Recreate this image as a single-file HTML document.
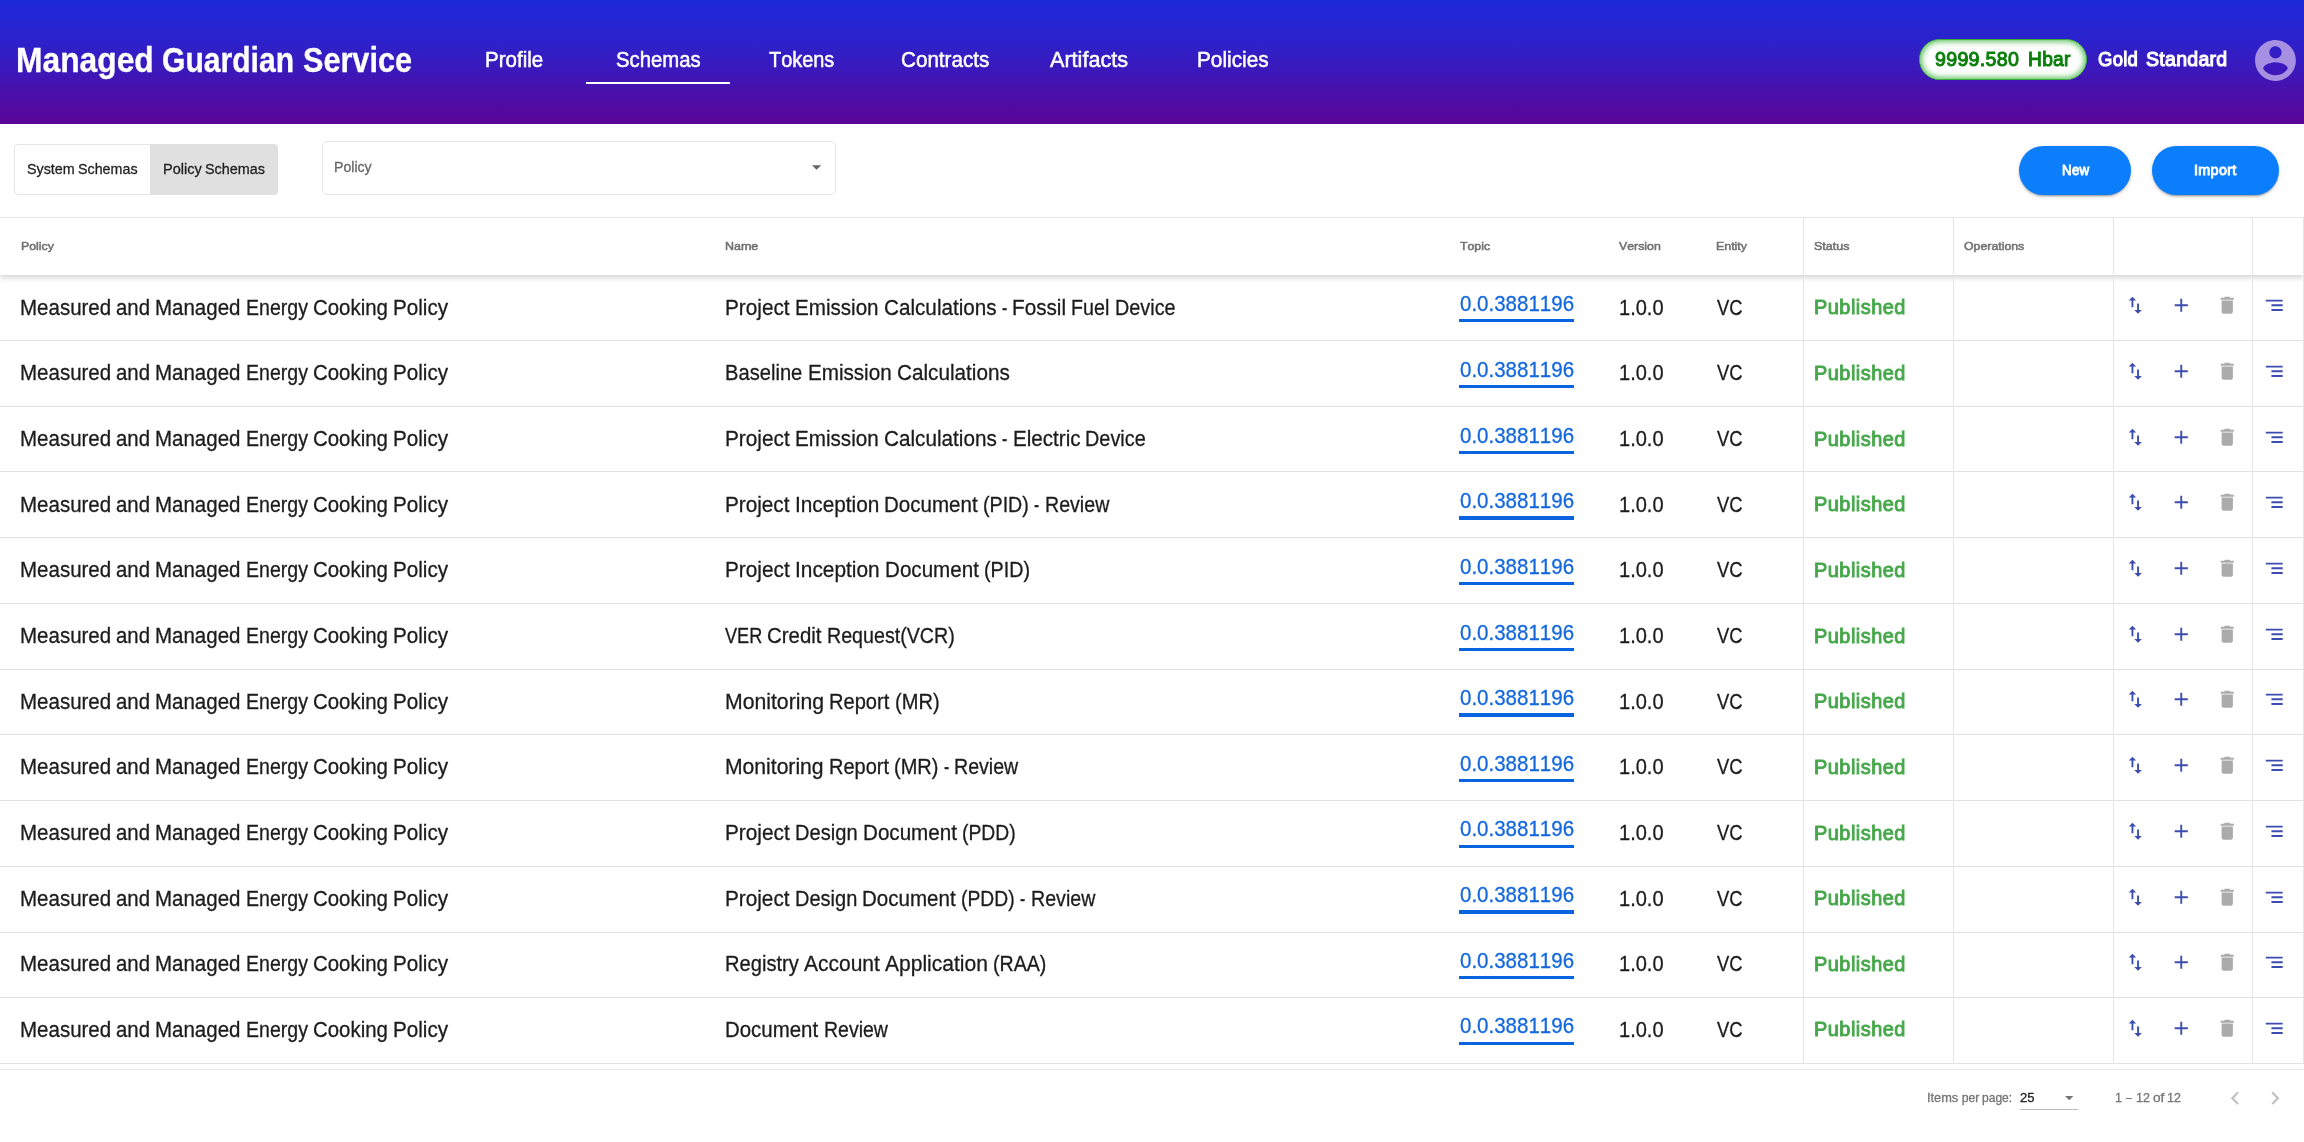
<!DOCTYPE html>
<html><head><meta charset="utf-8"><title>Schemas</title>
<style>
html,body{margin:0;padding:0;}
body{width:2304px;height:1142px;background:#fff;overflow:hidden;position:relative;font-family:"Liberation Sans",sans-serif;}
.t{position:absolute;white-space:nowrap;transform-origin:0 0;font-kerning:none;-webkit-text-stroke:0.3px currentColor;}
.a{position:absolute;}
.hl{position:absolute;left:0;width:2304px;height:1px;background:#e0e0e0;}
.vl{position:absolute;width:1px;background:#e5e5e5;top:217px;height:847px;}
svg{position:absolute;overflow:visible;}
#w{position:absolute;left:0;top:0;width:2304px;height:1142px;will-change:transform;}
</style></head><body><div id="w">

<div class="a" style="left:0;top:0;width:2304px;height:124px;background:linear-gradient(180deg,#1b28d8 0%,#2b22cd 30%,#3a19bc 55%,#53099f 88%,#5a059a 100%);"></div>
<span class="t" style="left:16.07px;top:38px;font-size:34.425px;line-height:44px;font-weight:bold;color:#fff;transform:scaleX(0.9238);">Managed</span>
<span class="t" style="left:162.37px;top:38px;font-size:34.425px;line-height:44px;font-weight:bold;color:#fff;transform:scaleX(0.8742);">Guardian</span>
<span class="t" style="left:303.02px;top:38px;font-size:34.425px;line-height:44px;font-weight:bold;color:#fff;transform:scaleX(0.8900);">Service</span>
<span class="t" style="left:485.12px;top:44px;font-size:22.236px;line-height:31px;font-weight:normal;color:#fff;transform:scaleX(0.9234);-webkit-text-stroke:0.5px #fff;">Profile</span>
<span class="t" style="left:615.68px;top:44px;font-size:22.236px;line-height:31px;font-weight:normal;color:#fff;transform:scaleX(0.9144);-webkit-text-stroke:0.5px #fff;">Schemas</span>
<span class="t" style="left:768.85px;top:44px;font-size:22.236px;line-height:31px;font-weight:normal;color:#fff;transform:scaleX(0.8965);-webkit-text-stroke:0.5px #fff;">Tokens</span>
<span class="t" style="left:901.05px;top:44px;font-size:22.236px;line-height:31px;font-weight:normal;color:#fff;transform:scaleX(0.9290);-webkit-text-stroke:0.5px #fff;">Contracts</span>
<span class="t" style="left:1049.56px;top:44px;font-size:22.236px;line-height:31px;font-weight:normal;color:#fff;transform:scaleX(0.9727);-webkit-text-stroke:0.5px #fff;">Artifacts</span>
<span class="t" style="left:1197.09px;top:44px;font-size:22.236px;line-height:31px;font-weight:normal;color:#fff;transform:scaleX(0.9352);-webkit-text-stroke:0.5px #fff;">Policies</span>
<div class="a" style="left:586px;top:82px;width:144px;height:2px;background:#fff;"></div>
<div class="a" style="left:1918.500px;top:39px;width:168px;height:41px;box-sizing:border-box;border:1.500px solid #35b035;border-radius:21px;background:#fff;box-shadow:inset 0 0 6px 1px #3cb43c;"></div>
<span class="t" style="left:1934.97px;top:44px;font-size:20.808px;line-height:29px;font-weight:normal;color:#0b7f0b;transform:scaleX(0.9439);letter-spacing:0.3px;-webkit-text-stroke:1.04px #0b7f0b;">9999.580</span>
<span class="t" style="left:2027.81px;top:44px;font-size:20.808px;line-height:29px;font-weight:normal;color:#0b7f0b;transform:scaleX(0.9224);letter-spacing:0.3px;-webkit-text-stroke:1.04px #0b7f0b;">Hbar</span>
<span class="t" style="left:2098.28px;top:44px;font-size:20.808px;line-height:29px;font-weight:normal;color:#fff;transform:scaleX(0.8897);letter-spacing:0.3px;-webkit-text-stroke:1.14px #fff;">Gold</span>
<span class="t" style="left:2146.05px;top:44px;font-size:20.808px;line-height:29px;font-weight:normal;color:#fff;transform:scaleX(0.9390);letter-spacing:0.3px;-webkit-text-stroke:1.14px #fff;">Standard</span>
<svg style="left:2250.5px;top:35.5px" width="49" height="49" viewBox="0 0 24 24"><path fill="#a78fe2" d="M12 2C6.48 2 2 6.48 2 12s4.48 10 10 10 10-4.480 10-10S17.520 2 12 2zm0 3c1.660 0 3 1.340 3 3s-1.340 3-3 3-3-1.340-3-3 1.340-3 3-3zm0 14.200c-2.500 0-4.710-1.280-6-3.220.030-1.990 4-3.080 6-3.080 1.990 0 5.970 1.090 6 3.080-1.290 1.940-3.500 3.220-6 3.220z"/></svg>
<div class="a" style="left:14px;top:144px;width:264px;height:50.500px;box-sizing:border-box;border:1px solid #e4e4e4;border-radius:4px;background:#fff;"></div>
<div class="a" style="left:150px;top:144px;width:128px;height:50.500px;box-sizing:border-box;border:1px solid #e0e0e0;border-radius:0 4px 4px 0;background:#e0e0e0;"></div>
<span class="t" style="left:27.04px;top:157px;font-size:15.3px;line-height:23px;font-weight:normal;color:#1f1f1f;transform:scaleX(0.9362);">System</span><span class="t" style="left:78.37px;top:157px;font-size:15.3px;line-height:23px;font-weight:normal;color:#1f1f1f;transform:scaleX(0.9336);">Schemas</span>
<span class="t" style="left:162.50px;top:157px;font-size:15.3px;line-height:23px;font-weight:normal;color:#1f1f1f;transform:scaleX(0.9534);">Policy</span><span class="t" style="left:205.00px;top:157px;font-size:15.3px;line-height:23px;font-weight:normal;color:#1f1f1f;transform:scaleX(0.9395);">Schemas</span>
<div class="a" style="left:322px;top:140.500px;width:513.500px;height:54px;box-sizing:border-box;border:1px solid #e6e6e6;border-radius:5px;background:#fff;"></div>
<span class="t" style="left:333.84px;top:155px;font-size:15.3px;line-height:23px;font-weight:normal;color:#666;transform:scaleX(0.9234);">Policy</span>
<svg style="left:811.700px;top:164.900px" width="9.200" height="5" viewBox="0 0 10 5"><path fill="#666" d="M0 0h10L5 5z"/></svg>
<div class="a" style="left:2019px;top:146px;width:112px;height:48.500px;border-radius:24.250px;background:#0d7efb;box-shadow:0 3px 1px -2px rgba(0,0,0,.2),0 2px 2px 0 rgba(0,0,0,.14),0 1px 5px 0 rgba(0,0,0,.12);"></div>
<span class="t" style="left:2061.52px;top:158px;font-size:15.096px;line-height:23px;font-weight:normal;color:#fff;transform:scaleX(0.8814);letter-spacing:0.35px;-webkit-text-stroke:0.94px #fff;">New</span>
<div class="a" style="left:2152px;top:146px;width:127px;height:48.500px;border-radius:24.250px;background:#0d7efb;box-shadow:0 3px 1px -2px rgba(0,0,0,.2),0 2px 2px 0 rgba(0,0,0,.14),0 1px 5px 0 rgba(0,0,0,.12);"></div>
<span class="t" style="left:2194.12px;top:158px;font-size:15.096px;line-height:23px;font-weight:normal;color:#fff;transform:scaleX(0.9508);letter-spacing:0.35px;-webkit-text-stroke:0.94px #fff;">Import</span>
<div class="hl" style="top:217px;background:#ebebeb;"></div>
<div class="a" style="left:0;top:218px;width:2304px;height:57px;background:#fff;box-shadow:0 3px 5px rgba(0,0,0,.16);"></div>
<span class="t" style="left:20.76px;top:236px;font-size:11.832px;line-height:20px;font-weight:normal;color:#707070;transform:scaleX(1.0450);-webkit-text-stroke:0.53px #707070;">Policy</span>
<span class="t" style="left:724.56px;top:236px;font-size:11.832px;line-height:20px;font-weight:normal;color:#707070;transform:scaleX(1.0524);-webkit-text-stroke:0.53px #707070;">Name</span>
<span class="t" style="left:1459.50px;top:236px;font-size:11.832px;line-height:20px;font-weight:normal;color:#707070;transform:scaleX(1.0385);-webkit-text-stroke:0.53px #707070;">Topic</span>
<span class="t" style="left:1619.22px;top:236px;font-size:11.832px;line-height:20px;font-weight:normal;color:#707070;transform:scaleX(1.0419);-webkit-text-stroke:0.53px #707070;">Version</span>
<span class="t" style="left:1716.26px;top:236px;font-size:11.832px;line-height:20px;font-weight:normal;color:#707070;transform:scaleX(1.0470);-webkit-text-stroke:0.53px #707070;">Entity</span>
<span class="t" style="left:1814.21px;top:236px;font-size:11.832px;line-height:20px;font-weight:normal;color:#707070;transform:scaleX(1.0571);-webkit-text-stroke:0.53px #707070;">Status</span>
<span class="t" style="left:1963.89px;top:236px;font-size:11.832px;line-height:20px;font-weight:normal;color:#707070;transform:scaleX(1.0414);-webkit-text-stroke:0.53px #707070;">Operations</span>
<div class="hl" style="top:340.00px;"></div>
<span class="t" style="left:20.01px;top:292px;font-size:21.624px;line-height:31px;font-weight:normal;color:#1c1c1c;transform:scaleX(0.9488);">Measured</span><span class="t" style="left:116.32px;top:292px;font-size:21.624px;line-height:31px;font-weight:normal;color:#1c1c1c;transform:scaleX(0.9435);">and</span><span class="t" style="left:155.45px;top:292px;font-size:21.624px;line-height:31px;font-weight:normal;color:#1c1c1c;transform:scaleX(0.9483);">Managed</span><span class="t" style="left:246.12px;top:292px;font-size:21.624px;line-height:31px;font-weight:normal;color:#1c1c1c;transform:scaleX(0.9040);">Energy</span><span class="t" style="left:313.14px;top:292px;font-size:21.624px;line-height:31px;font-weight:normal;color:#1c1c1c;transform:scaleX(0.9448);">Cooking</span><span class="t" style="left:393.18px;top:292px;font-size:21.624px;line-height:31px;font-weight:normal;color:#1c1c1c;transform:scaleX(0.9546);">Policy</span>
<span class="t" style="left:725.28px;top:292px;font-size:21.624px;line-height:31px;font-weight:normal;color:#1c1c1c;transform:scaleX(0.9611);">Project</span><span class="t" style="left:795.02px;top:292px;font-size:21.624px;line-height:31px;font-weight:normal;color:#1c1c1c;transform:scaleX(0.9532);">Emission</span><span class="t" style="left:883.68px;top:292px;font-size:21.624px;line-height:31px;font-weight:normal;color:#1c1c1c;transform:scaleX(0.9571);">Calculations</span><span class="t" style="left:1001.70px;top:292px;font-size:21.624px;line-height:31px;font-weight:normal;color:#1c1c1c;transform:scaleX(0.7252);">-</span><span class="t" style="left:1012.18px;top:292px;font-size:21.624px;line-height:31px;font-weight:normal;color:#1c1c1c;transform:scaleX(0.9576);">Fossil</span><span class="t" style="left:1071.37px;top:292px;font-size:21.624px;line-height:31px;font-weight:normal;color:#1c1c1c;transform:scaleX(0.9107);">Fuel</span><span class="t" style="left:1114.85px;top:292px;font-size:21.624px;line-height:31px;font-weight:normal;color:#1c1c1c;transform:scaleX(0.9174);">Device</span>
<span class="t" style="left:1459.50px;top:288px;font-size:21.624px;line-height:31px;font-weight:normal;color:#1468de;transform:scaleX(0.9489);">0.0.3881196</span>
<div class="a" style="left:1459.300px;top:319.30px;width:114.700px;height:3.200px;background:#0a63df;"></div>
<span class="t" style="left:1618.77px;top:292px;font-size:21.624px;line-height:31px;font-weight:normal;color:#1c1c1c;transform:scaleX(0.9276);">1.0.0</span>
<span class="t" style="left:1716.92px;top:292px;font-size:21.624px;line-height:31px;font-weight:normal;color:#1c1c1c;transform:scaleX(0.8516);">VC</span>
<span class="t" style="left:1814.01px;top:293px;font-size:19.992px;line-height:28px;font-weight:normal;color:#46a84a;transform:scaleX(0.9958);letter-spacing:0.5px;-webkit-text-stroke:0.90px #46a84a;">Published</span>
<svg style="left:2124px;top:294.40px" width="22.5" height="22.5" viewBox="0 0 24 24"><path fill="#3c4cb0" d="M9 3L5 6.990h3V14h2V6.990h3L9 3zm7 14.010V10h-2v7.010h-3L15 21l4-3.990h-3z"/></svg>
<svg style="left:2170px;top:294.40px" width="22.5" height="22.5" viewBox="0 0 24 24"><path fill="#3c4cb0" d="M19 13h-6v6h-2v-6H5v-2h6V5h2v6h6v2z"/></svg>
<svg style="left:2216.200px;top:294.40px" width="22.5" height="22.5" viewBox="0 0 24 24"><path fill="#ababab" d="M6 19c0 1.100.900 2 2 2h8c1.100 0 2-.900 2-2V7H6v12zM19 4h-3.500l-1-1h-5l-1 1H5v2h14V4z"/></svg>
<svg style="left:2263.200px;top:294.40px" width="22.5" height="22.5" viewBox="0 0 24 24"><path fill="#3c4cb0" d="M9 18h12v-2H9v2zM3 6v2h18V6H3zm6 7h12v-2H9v2z"/></svg>
<div class="hl" style="top:405.73px;"></div>
<span class="t" style="left:20.01px;top:357px;font-size:21.624px;line-height:31px;font-weight:normal;color:#1c1c1c;transform:scaleX(0.9488);">Measured</span><span class="t" style="left:116.32px;top:357px;font-size:21.624px;line-height:31px;font-weight:normal;color:#1c1c1c;transform:scaleX(0.9435);">and</span><span class="t" style="left:155.45px;top:357px;font-size:21.624px;line-height:31px;font-weight:normal;color:#1c1c1c;transform:scaleX(0.9483);">Managed</span><span class="t" style="left:246.12px;top:357px;font-size:21.624px;line-height:31px;font-weight:normal;color:#1c1c1c;transform:scaleX(0.9040);">Energy</span><span class="t" style="left:313.14px;top:357px;font-size:21.624px;line-height:31px;font-weight:normal;color:#1c1c1c;transform:scaleX(0.9448);">Cooking</span><span class="t" style="left:393.18px;top:357px;font-size:21.624px;line-height:31px;font-weight:normal;color:#1c1c1c;transform:scaleX(0.9546);">Policy</span>
<span class="t" style="left:725.33px;top:357px;font-size:21.624px;line-height:31px;font-weight:normal;color:#1c1c1c;transform:scaleX(0.9328);">Baseline</span><span class="t" style="left:807.79px;top:357px;font-size:21.624px;line-height:31px;font-weight:normal;color:#1c1c1c;transform:scaleX(0.9539);">Emission</span><span class="t" style="left:896.52px;top:357px;font-size:21.624px;line-height:31px;font-weight:normal;color:#1c1c1c;transform:scaleX(0.9579);">Calculations</span>
<span class="t" style="left:1459.50px;top:354px;font-size:21.624px;line-height:31px;font-weight:normal;color:#1468de;transform:scaleX(0.9489);">0.0.3881196</span>
<div class="a" style="left:1459.300px;top:384.98px;width:114.700px;height:3.200px;background:#0a63df;"></div>
<span class="t" style="left:1618.77px;top:357px;font-size:21.624px;line-height:31px;font-weight:normal;color:#1c1c1c;transform:scaleX(0.9276);">1.0.0</span>
<span class="t" style="left:1716.92px;top:357px;font-size:21.624px;line-height:31px;font-weight:normal;color:#1c1c1c;transform:scaleX(0.8516);">VC</span>
<span class="t" style="left:1814.01px;top:359px;font-size:19.992px;line-height:28px;font-weight:normal;color:#46a84a;transform:scaleX(0.9958);letter-spacing:0.5px;-webkit-text-stroke:0.90px #46a84a;">Published</span>
<svg style="left:2124px;top:360.08px" width="22.5" height="22.5" viewBox="0 0 24 24"><path fill="#3c4cb0" d="M9 3L5 6.990h3V14h2V6.990h3L9 3zm7 14.010V10h-2v7.010h-3L15 21l4-3.990h-3z"/></svg>
<svg style="left:2170px;top:360.08px" width="22.5" height="22.5" viewBox="0 0 24 24"><path fill="#3c4cb0" d="M19 13h-6v6h-2v-6H5v-2h6V5h2v6h6v2z"/></svg>
<svg style="left:2216.200px;top:360.08px" width="22.5" height="22.5" viewBox="0 0 24 24"><path fill="#ababab" d="M6 19c0 1.100.900 2 2 2h8c1.100 0 2-.900 2-2V7H6v12zM19 4h-3.500l-1-1h-5l-1 1H5v2h14V4z"/></svg>
<svg style="left:2263.200px;top:360.08px" width="22.5" height="22.5" viewBox="0 0 24 24"><path fill="#3c4cb0" d="M9 18h12v-2H9v2zM3 6v2h18V6H3zm6 7h12v-2H9v2z"/></svg>
<div class="hl" style="top:471.46px;"></div>
<span class="t" style="left:20.01px;top:423px;font-size:21.624px;line-height:31px;font-weight:normal;color:#1c1c1c;transform:scaleX(0.9488);">Measured</span><span class="t" style="left:116.32px;top:423px;font-size:21.624px;line-height:31px;font-weight:normal;color:#1c1c1c;transform:scaleX(0.9435);">and</span><span class="t" style="left:155.45px;top:423px;font-size:21.624px;line-height:31px;font-weight:normal;color:#1c1c1c;transform:scaleX(0.9483);">Managed</span><span class="t" style="left:246.12px;top:423px;font-size:21.624px;line-height:31px;font-weight:normal;color:#1c1c1c;transform:scaleX(0.9040);">Energy</span><span class="t" style="left:313.14px;top:423px;font-size:21.624px;line-height:31px;font-weight:normal;color:#1c1c1c;transform:scaleX(0.9448);">Cooking</span><span class="t" style="left:393.18px;top:423px;font-size:21.624px;line-height:31px;font-weight:normal;color:#1c1c1c;transform:scaleX(0.9546);">Policy</span>
<span class="t" style="left:725.28px;top:423px;font-size:21.624px;line-height:31px;font-weight:normal;color:#1c1c1c;transform:scaleX(0.9624);">Project</span><span class="t" style="left:795.11px;top:423px;font-size:21.624px;line-height:31px;font-weight:normal;color:#1c1c1c;transform:scaleX(0.9545);">Emission</span><span class="t" style="left:883.89px;top:423px;font-size:21.624px;line-height:31px;font-weight:normal;color:#1c1c1c;transform:scaleX(0.9584);">Calculations</span><span class="t" style="left:1002.07px;top:423px;font-size:21.624px;line-height:31px;font-weight:normal;color:#1c1c1c;transform:scaleX(0.7262);">-</span><span class="t" style="left:1012.58px;top:423px;font-size:21.624px;line-height:31px;font-weight:normal;color:#1c1c1c;transform:scaleX(0.9531);">Electric</span><span class="t" style="left:1085.27px;top:423px;font-size:21.624px;line-height:31px;font-weight:normal;color:#1c1c1c;transform:scaleX(0.9186);">Device</span>
<span class="t" style="left:1459.50px;top:420px;font-size:21.624px;line-height:31px;font-weight:normal;color:#1468de;transform:scaleX(0.9489);">0.0.3881196</span>
<div class="a" style="left:1459.300px;top:450.66px;width:114.700px;height:3.200px;background:#0a63df;"></div>
<span class="t" style="left:1618.77px;top:423px;font-size:21.624px;line-height:31px;font-weight:normal;color:#1c1c1c;transform:scaleX(0.9276);">1.0.0</span>
<span class="t" style="left:1716.92px;top:423px;font-size:21.624px;line-height:31px;font-weight:normal;color:#1c1c1c;transform:scaleX(0.8516);">VC</span>
<span class="t" style="left:1814.01px;top:425px;font-size:19.992px;line-height:28px;font-weight:normal;color:#46a84a;transform:scaleX(0.9958);letter-spacing:0.5px;-webkit-text-stroke:0.90px #46a84a;">Published</span>
<svg style="left:2124px;top:425.76px" width="22.5" height="22.5" viewBox="0 0 24 24"><path fill="#3c4cb0" d="M9 3L5 6.990h3V14h2V6.990h3L9 3zm7 14.010V10h-2v7.010h-3L15 21l4-3.990h-3z"/></svg>
<svg style="left:2170px;top:425.76px" width="22.5" height="22.5" viewBox="0 0 24 24"><path fill="#3c4cb0" d="M19 13h-6v6h-2v-6H5v-2h6V5h2v6h6v2z"/></svg>
<svg style="left:2216.200px;top:425.76px" width="22.5" height="22.5" viewBox="0 0 24 24"><path fill="#ababab" d="M6 19c0 1.100.900 2 2 2h8c1.100 0 2-.900 2-2V7H6v12zM19 4h-3.500l-1-1h-5l-1 1H5v2h14V4z"/></svg>
<svg style="left:2263.200px;top:425.76px" width="22.5" height="22.5" viewBox="0 0 24 24"><path fill="#3c4cb0" d="M9 18h12v-2H9v2zM3 6v2h18V6H3zm6 7h12v-2H9v2z"/></svg>
<div class="hl" style="top:537.19px;"></div>
<span class="t" style="left:20.01px;top:489px;font-size:21.624px;line-height:31px;font-weight:normal;color:#1c1c1c;transform:scaleX(0.9488);">Measured</span><span class="t" style="left:116.32px;top:489px;font-size:21.624px;line-height:31px;font-weight:normal;color:#1c1c1c;transform:scaleX(0.9435);">and</span><span class="t" style="left:155.45px;top:489px;font-size:21.624px;line-height:31px;font-weight:normal;color:#1c1c1c;transform:scaleX(0.9483);">Managed</span><span class="t" style="left:246.12px;top:489px;font-size:21.624px;line-height:31px;font-weight:normal;color:#1c1c1c;transform:scaleX(0.9040);">Energy</span><span class="t" style="left:313.14px;top:489px;font-size:21.624px;line-height:31px;font-weight:normal;color:#1c1c1c;transform:scaleX(0.9448);">Cooking</span><span class="t" style="left:393.18px;top:489px;font-size:21.624px;line-height:31px;font-weight:normal;color:#1c1c1c;transform:scaleX(0.9546);">Policy</span>
<span class="t" style="left:725.28px;top:489px;font-size:21.624px;line-height:31px;font-weight:normal;color:#1c1c1c;transform:scaleX(0.9589);">Project</span><span class="t" style="left:794.83px;top:489px;font-size:21.624px;line-height:31px;font-weight:normal;color:#1c1c1c;transform:scaleX(0.9617);">Inception</span><span class="t" style="left:884.25px;top:489px;font-size:21.624px;line-height:31px;font-weight:normal;color:#1c1c1c;transform:scaleX(0.9505);">Document</span><span class="t" style="left:983.03px;top:489px;font-size:21.624px;line-height:31px;font-weight:normal;color:#1c1c1c;transform:scaleX(0.9082);">(PID)</span><span class="t" style="left:1034.17px;top:489px;font-size:21.624px;line-height:31px;font-weight:normal;color:#1c1c1c;transform:scaleX(0.7235);">-</span><span class="t" style="left:1044.71px;top:489px;font-size:21.624px;line-height:31px;font-weight:normal;color:#1c1c1c;transform:scaleX(0.9075);">Review</span>
<span class="t" style="left:1459.50px;top:485px;font-size:21.624px;line-height:31px;font-weight:normal;color:#1468de;transform:scaleX(0.9489);">0.0.3881196</span>
<div class="a" style="left:1459.300px;top:516.34px;width:114.700px;height:3.200px;background:#0a63df;"></div>
<span class="t" style="left:1618.77px;top:489px;font-size:21.624px;line-height:31px;font-weight:normal;color:#1c1c1c;transform:scaleX(0.9276);">1.0.0</span>
<span class="t" style="left:1716.92px;top:489px;font-size:21.624px;line-height:31px;font-weight:normal;color:#1c1c1c;transform:scaleX(0.8516);">VC</span>
<span class="t" style="left:1814.01px;top:490px;font-size:19.992px;line-height:28px;font-weight:normal;color:#46a84a;transform:scaleX(0.9958);letter-spacing:0.5px;-webkit-text-stroke:0.90px #46a84a;">Published</span>
<svg style="left:2124px;top:491.44px" width="22.5" height="22.5" viewBox="0 0 24 24"><path fill="#3c4cb0" d="M9 3L5 6.990h3V14h2V6.990h3L9 3zm7 14.010V10h-2v7.010h-3L15 21l4-3.990h-3z"/></svg>
<svg style="left:2170px;top:491.44px" width="22.5" height="22.5" viewBox="0 0 24 24"><path fill="#3c4cb0" d="M19 13h-6v6h-2v-6H5v-2h6V5h2v6h6v2z"/></svg>
<svg style="left:2216.200px;top:491.44px" width="22.5" height="22.5" viewBox="0 0 24 24"><path fill="#ababab" d="M6 19c0 1.100.900 2 2 2h8c1.100 0 2-.900 2-2V7H6v12zM19 4h-3.500l-1-1h-5l-1 1H5v2h14V4z"/></svg>
<svg style="left:2263.200px;top:491.44px" width="22.5" height="22.5" viewBox="0 0 24 24"><path fill="#3c4cb0" d="M9 18h12v-2H9v2zM3 6v2h18V6H3zm6 7h12v-2H9v2z"/></svg>
<div class="hl" style="top:602.92px;"></div>
<span class="t" style="left:20.01px;top:554px;font-size:21.624px;line-height:31px;font-weight:normal;color:#1c1c1c;transform:scaleX(0.9488);">Measured</span><span class="t" style="left:116.32px;top:554px;font-size:21.624px;line-height:31px;font-weight:normal;color:#1c1c1c;transform:scaleX(0.9435);">and</span><span class="t" style="left:155.45px;top:554px;font-size:21.624px;line-height:31px;font-weight:normal;color:#1c1c1c;transform:scaleX(0.9483);">Managed</span><span class="t" style="left:246.12px;top:554px;font-size:21.624px;line-height:31px;font-weight:normal;color:#1c1c1c;transform:scaleX(0.9040);">Energy</span><span class="t" style="left:313.14px;top:554px;font-size:21.624px;line-height:31px;font-weight:normal;color:#1c1c1c;transform:scaleX(0.9448);">Cooking</span><span class="t" style="left:393.18px;top:554px;font-size:21.624px;line-height:31px;font-weight:normal;color:#1c1c1c;transform:scaleX(0.9546);">Policy</span>
<span class="t" style="left:725.28px;top:554px;font-size:21.624px;line-height:31px;font-weight:normal;color:#1c1c1c;transform:scaleX(0.9619);">Project</span><span class="t" style="left:795.06px;top:554px;font-size:21.624px;line-height:31px;font-weight:normal;color:#1c1c1c;transform:scaleX(0.9647);">Inception</span><span class="t" style="left:884.76px;top:554px;font-size:21.624px;line-height:31px;font-weight:normal;color:#1c1c1c;transform:scaleX(0.9535);">Document</span><span class="t" style="left:983.86px;top:554px;font-size:21.624px;line-height:31px;font-weight:normal;color:#1c1c1c;transform:scaleX(0.9111);">(PID)</span>
<span class="t" style="left:1459.50px;top:551px;font-size:21.624px;line-height:31px;font-weight:normal;color:#1468de;transform:scaleX(0.9489);">0.0.3881196</span>
<div class="a" style="left:1459.300px;top:582.02px;width:114.700px;height:3.200px;background:#0a63df;"></div>
<span class="t" style="left:1618.77px;top:554px;font-size:21.624px;line-height:31px;font-weight:normal;color:#1c1c1c;transform:scaleX(0.9276);">1.0.0</span>
<span class="t" style="left:1716.92px;top:554px;font-size:21.624px;line-height:31px;font-weight:normal;color:#1c1c1c;transform:scaleX(0.8516);">VC</span>
<span class="t" style="left:1814.01px;top:556px;font-size:19.992px;line-height:28px;font-weight:normal;color:#46a84a;transform:scaleX(0.9958);letter-spacing:0.5px;-webkit-text-stroke:0.90px #46a84a;">Published</span>
<svg style="left:2124px;top:557.12px" width="22.5" height="22.5" viewBox="0 0 24 24"><path fill="#3c4cb0" d="M9 3L5 6.990h3V14h2V6.990h3L9 3zm7 14.010V10h-2v7.010h-3L15 21l4-3.990h-3z"/></svg>
<svg style="left:2170px;top:557.12px" width="22.5" height="22.5" viewBox="0 0 24 24"><path fill="#3c4cb0" d="M19 13h-6v6h-2v-6H5v-2h6V5h2v6h6v2z"/></svg>
<svg style="left:2216.200px;top:557.12px" width="22.5" height="22.5" viewBox="0 0 24 24"><path fill="#ababab" d="M6 19c0 1.100.900 2 2 2h8c1.100 0 2-.900 2-2V7H6v12zM19 4h-3.500l-1-1h-5l-1 1H5v2h14V4z"/></svg>
<svg style="left:2263.200px;top:557.12px" width="22.5" height="22.5" viewBox="0 0 24 24"><path fill="#3c4cb0" d="M9 18h12v-2H9v2zM3 6v2h18V6H3zm6 7h12v-2H9v2z"/></svg>
<div class="hl" style="top:668.65px;"></div>
<span class="t" style="left:20.01px;top:620px;font-size:21.624px;line-height:31px;font-weight:normal;color:#1c1c1c;transform:scaleX(0.9488);">Measured</span><span class="t" style="left:116.32px;top:620px;font-size:21.624px;line-height:31px;font-weight:normal;color:#1c1c1c;transform:scaleX(0.9435);">and</span><span class="t" style="left:155.45px;top:620px;font-size:21.624px;line-height:31px;font-weight:normal;color:#1c1c1c;transform:scaleX(0.9483);">Managed</span><span class="t" style="left:246.12px;top:620px;font-size:21.624px;line-height:31px;font-weight:normal;color:#1c1c1c;transform:scaleX(0.9040);">Energy</span><span class="t" style="left:313.14px;top:620px;font-size:21.624px;line-height:31px;font-weight:normal;color:#1c1c1c;transform:scaleX(0.9448);">Cooking</span><span class="t" style="left:393.18px;top:620px;font-size:21.624px;line-height:31px;font-weight:normal;color:#1c1c1c;transform:scaleX(0.9546);">Policy</span>
<span class="t" style="left:724.82px;top:620px;font-size:21.624px;line-height:31px;font-weight:normal;color:#1c1c1c;transform:scaleX(0.8384);">VER</span><span class="t" style="left:767.30px;top:620px;font-size:21.624px;line-height:31px;font-weight:normal;color:#1c1c1c;transform:scaleX(0.9446);">Credit</span><span class="t" style="left:826.95px;top:620px;font-size:21.624px;line-height:31px;font-weight:normal;color:#1c1c1c;transform:scaleX(0.9095);">Request(VCR)</span>
<span class="t" style="left:1459.50px;top:617px;font-size:21.624px;line-height:31px;font-weight:normal;color:#1468de;transform:scaleX(0.9489);">0.0.3881196</span>
<div class="a" style="left:1459.300px;top:647.70px;width:114.700px;height:3.200px;background:#0a63df;"></div>
<span class="t" style="left:1618.77px;top:620px;font-size:21.624px;line-height:31px;font-weight:normal;color:#1c1c1c;transform:scaleX(0.9276);">1.0.0</span>
<span class="t" style="left:1716.92px;top:620px;font-size:21.624px;line-height:31px;font-weight:normal;color:#1c1c1c;transform:scaleX(0.8516);">VC</span>
<span class="t" style="left:1814.01px;top:622px;font-size:19.992px;line-height:28px;font-weight:normal;color:#46a84a;transform:scaleX(0.9958);letter-spacing:0.5px;-webkit-text-stroke:0.90px #46a84a;">Published</span>
<svg style="left:2124px;top:622.80px" width="22.5" height="22.5" viewBox="0 0 24 24"><path fill="#3c4cb0" d="M9 3L5 6.990h3V14h2V6.990h3L9 3zm7 14.010V10h-2v7.010h-3L15 21l4-3.990h-3z"/></svg>
<svg style="left:2170px;top:622.80px" width="22.5" height="22.5" viewBox="0 0 24 24"><path fill="#3c4cb0" d="M19 13h-6v6h-2v-6H5v-2h6V5h2v6h6v2z"/></svg>
<svg style="left:2216.200px;top:622.80px" width="22.5" height="22.5" viewBox="0 0 24 24"><path fill="#ababab" d="M6 19c0 1.100.900 2 2 2h8c1.100 0 2-.900 2-2V7H6v12zM19 4h-3.500l-1-1h-5l-1 1H5v2h14V4z"/></svg>
<svg style="left:2263.200px;top:622.80px" width="22.5" height="22.5" viewBox="0 0 24 24"><path fill="#3c4cb0" d="M9 18h12v-2H9v2zM3 6v2h18V6H3zm6 7h12v-2H9v2z"/></svg>
<div class="hl" style="top:734.38px;"></div>
<span class="t" style="left:20.01px;top:686px;font-size:21.624px;line-height:31px;font-weight:normal;color:#1c1c1c;transform:scaleX(0.9488);">Measured</span><span class="t" style="left:116.32px;top:686px;font-size:21.624px;line-height:31px;font-weight:normal;color:#1c1c1c;transform:scaleX(0.9435);">and</span><span class="t" style="left:155.45px;top:686px;font-size:21.624px;line-height:31px;font-weight:normal;color:#1c1c1c;transform:scaleX(0.9483);">Managed</span><span class="t" style="left:246.12px;top:686px;font-size:21.624px;line-height:31px;font-weight:normal;color:#1c1c1c;transform:scaleX(0.9040);">Energy</span><span class="t" style="left:313.14px;top:686px;font-size:21.624px;line-height:31px;font-weight:normal;color:#1c1c1c;transform:scaleX(0.9448);">Cooking</span><span class="t" style="left:393.18px;top:686px;font-size:21.624px;line-height:31px;font-weight:normal;color:#1c1c1c;transform:scaleX(0.9546);">Policy</span>
<span class="t" style="left:725.25px;top:686px;font-size:21.624px;line-height:31px;font-weight:normal;color:#1c1c1c;transform:scaleX(0.9813);">Monitoring</span><span class="t" style="left:829.39px;top:686px;font-size:21.624px;line-height:31px;font-weight:normal;color:#1c1c1c;transform:scaleX(0.9285);">Report</span><span class="t" style="left:894.75px;top:686px;font-size:21.624px;line-height:31px;font-weight:normal;color:#1c1c1c;transform:scaleX(0.9284);">(MR)</span>
<span class="t" style="left:1459.50px;top:682px;font-size:21.624px;line-height:31px;font-weight:normal;color:#1468de;transform:scaleX(0.9489);">0.0.3881196</span>
<div class="a" style="left:1459.300px;top:713.38px;width:114.700px;height:3.200px;background:#0a63df;"></div>
<span class="t" style="left:1618.77px;top:686px;font-size:21.624px;line-height:31px;font-weight:normal;color:#1c1c1c;transform:scaleX(0.9276);">1.0.0</span>
<span class="t" style="left:1716.92px;top:686px;font-size:21.624px;line-height:31px;font-weight:normal;color:#1c1c1c;transform:scaleX(0.8516);">VC</span>
<span class="t" style="left:1814.01px;top:687px;font-size:19.992px;line-height:28px;font-weight:normal;color:#46a84a;transform:scaleX(0.9958);letter-spacing:0.5px;-webkit-text-stroke:0.90px #46a84a;">Published</span>
<svg style="left:2124px;top:688.48px" width="22.5" height="22.5" viewBox="0 0 24 24"><path fill="#3c4cb0" d="M9 3L5 6.990h3V14h2V6.990h3L9 3zm7 14.010V10h-2v7.010h-3L15 21l4-3.990h-3z"/></svg>
<svg style="left:2170px;top:688.48px" width="22.5" height="22.5" viewBox="0 0 24 24"><path fill="#3c4cb0" d="M19 13h-6v6h-2v-6H5v-2h6V5h2v6h6v2z"/></svg>
<svg style="left:2216.200px;top:688.48px" width="22.5" height="22.5" viewBox="0 0 24 24"><path fill="#ababab" d="M6 19c0 1.100.900 2 2 2h8c1.100 0 2-.900 2-2V7H6v12zM19 4h-3.500l-1-1h-5l-1 1H5v2h14V4z"/></svg>
<svg style="left:2263.200px;top:688.48px" width="22.5" height="22.5" viewBox="0 0 24 24"><path fill="#3c4cb0" d="M9 18h12v-2H9v2zM3 6v2h18V6H3zm6 7h12v-2H9v2z"/></svg>
<div class="hl" style="top:800.11px;"></div>
<span class="t" style="left:20.01px;top:751px;font-size:21.624px;line-height:31px;font-weight:normal;color:#1c1c1c;transform:scaleX(0.9488);">Measured</span><span class="t" style="left:116.32px;top:751px;font-size:21.624px;line-height:31px;font-weight:normal;color:#1c1c1c;transform:scaleX(0.9435);">and</span><span class="t" style="left:155.45px;top:751px;font-size:21.624px;line-height:31px;font-weight:normal;color:#1c1c1c;transform:scaleX(0.9483);">Managed</span><span class="t" style="left:246.12px;top:751px;font-size:21.624px;line-height:31px;font-weight:normal;color:#1c1c1c;transform:scaleX(0.9040);">Energy</span><span class="t" style="left:313.14px;top:751px;font-size:21.624px;line-height:31px;font-weight:normal;color:#1c1c1c;transform:scaleX(0.9448);">Cooking</span><span class="t" style="left:393.18px;top:751px;font-size:21.624px;line-height:31px;font-weight:normal;color:#1c1c1c;transform:scaleX(0.9546);">Policy</span>
<span class="t" style="left:725.25px;top:751px;font-size:21.624px;line-height:31px;font-weight:normal;color:#1c1c1c;transform:scaleX(0.9771);">Monitoring</span><span class="t" style="left:828.94px;top:751px;font-size:21.624px;line-height:31px;font-weight:normal;color:#1c1c1c;transform:scaleX(0.9245);">Report</span><span class="t" style="left:894.03px;top:751px;font-size:21.624px;line-height:31px;font-weight:normal;color:#1c1c1c;transform:scaleX(0.9245);">(MR)</span><span class="t" style="left:943.72px;top:751px;font-size:21.624px;line-height:31px;font-weight:normal;color:#1c1c1c;transform:scaleX(0.7230);">-</span><span class="t" style="left:954.26px;top:751px;font-size:21.624px;line-height:31px;font-weight:normal;color:#1c1c1c;transform:scaleX(0.9068);">Review</span>
<span class="t" style="left:1459.50px;top:748px;font-size:21.624px;line-height:31px;font-weight:normal;color:#1468de;transform:scaleX(0.9489);">0.0.3881196</span>
<div class="a" style="left:1459.300px;top:779.06px;width:114.700px;height:3.200px;background:#0a63df;"></div>
<span class="t" style="left:1618.77px;top:751px;font-size:21.624px;line-height:31px;font-weight:normal;color:#1c1c1c;transform:scaleX(0.9276);">1.0.0</span>
<span class="t" style="left:1716.92px;top:751px;font-size:21.624px;line-height:31px;font-weight:normal;color:#1c1c1c;transform:scaleX(0.8516);">VC</span>
<span class="t" style="left:1814.01px;top:753px;font-size:19.992px;line-height:28px;font-weight:normal;color:#46a84a;transform:scaleX(0.9958);letter-spacing:0.5px;-webkit-text-stroke:0.90px #46a84a;">Published</span>
<svg style="left:2124px;top:754.16px" width="22.5" height="22.5" viewBox="0 0 24 24"><path fill="#3c4cb0" d="M9 3L5 6.990h3V14h2V6.990h3L9 3zm7 14.010V10h-2v7.010h-3L15 21l4-3.990h-3z"/></svg>
<svg style="left:2170px;top:754.16px" width="22.5" height="22.5" viewBox="0 0 24 24"><path fill="#3c4cb0" d="M19 13h-6v6h-2v-6H5v-2h6V5h2v6h6v2z"/></svg>
<svg style="left:2216.200px;top:754.16px" width="22.5" height="22.5" viewBox="0 0 24 24"><path fill="#ababab" d="M6 19c0 1.100.900 2 2 2h8c1.100 0 2-.900 2-2V7H6v12zM19 4h-3.500l-1-1h-5l-1 1H5v2h14V4z"/></svg>
<svg style="left:2263.200px;top:754.16px" width="22.5" height="22.5" viewBox="0 0 24 24"><path fill="#3c4cb0" d="M9 18h12v-2H9v2zM3 6v2h18V6H3zm6 7h12v-2H9v2z"/></svg>
<div class="hl" style="top:865.84px;"></div>
<span class="t" style="left:20.01px;top:817px;font-size:21.624px;line-height:31px;font-weight:normal;color:#1c1c1c;transform:scaleX(0.9488);">Measured</span><span class="t" style="left:116.32px;top:817px;font-size:21.624px;line-height:31px;font-weight:normal;color:#1c1c1c;transform:scaleX(0.9435);">and</span><span class="t" style="left:155.45px;top:817px;font-size:21.624px;line-height:31px;font-weight:normal;color:#1c1c1c;transform:scaleX(0.9483);">Managed</span><span class="t" style="left:246.12px;top:817px;font-size:21.624px;line-height:31px;font-weight:normal;color:#1c1c1c;transform:scaleX(0.9040);">Energy</span><span class="t" style="left:313.14px;top:817px;font-size:21.624px;line-height:31px;font-weight:normal;color:#1c1c1c;transform:scaleX(0.9448);">Cooking</span><span class="t" style="left:393.18px;top:817px;font-size:21.624px;line-height:31px;font-weight:normal;color:#1c1c1c;transform:scaleX(0.9546);">Policy</span>
<span class="t" style="left:725.28px;top:817px;font-size:21.624px;line-height:31px;font-weight:normal;color:#1c1c1c;transform:scaleX(0.9623);">Project</span><span class="t" style="left:795.15px;top:817px;font-size:21.624px;line-height:31px;font-weight:normal;color:#1c1c1c;transform:scaleX(0.9300);">Design</span><span class="t" style="left:862.84px;top:817px;font-size:21.624px;line-height:31px;font-weight:normal;color:#1c1c1c;transform:scaleX(0.9539);">Document</span><span class="t" style="left:961.99px;top:817px;font-size:21.624px;line-height:31px;font-weight:normal;color:#1c1c1c;transform:scaleX(0.8959);">(PDD)</span>
<span class="t" style="left:1459.50px;top:813px;font-size:21.624px;line-height:31px;font-weight:normal;color:#1468de;transform:scaleX(0.9489);">0.0.3881196</span>
<div class="a" style="left:1459.300px;top:844.74px;width:114.700px;height:3.200px;background:#0a63df;"></div>
<span class="t" style="left:1618.77px;top:817px;font-size:21.624px;line-height:31px;font-weight:normal;color:#1c1c1c;transform:scaleX(0.9276);">1.0.0</span>
<span class="t" style="left:1716.92px;top:817px;font-size:21.624px;line-height:31px;font-weight:normal;color:#1c1c1c;transform:scaleX(0.8516);">VC</span>
<span class="t" style="left:1814.01px;top:819px;font-size:19.992px;line-height:28px;font-weight:normal;color:#46a84a;transform:scaleX(0.9958);letter-spacing:0.5px;-webkit-text-stroke:0.90px #46a84a;">Published</span>
<svg style="left:2124px;top:819.84px" width="22.5" height="22.5" viewBox="0 0 24 24"><path fill="#3c4cb0" d="M9 3L5 6.990h3V14h2V6.990h3L9 3zm7 14.010V10h-2v7.010h-3L15 21l4-3.990h-3z"/></svg>
<svg style="left:2170px;top:819.84px" width="22.5" height="22.5" viewBox="0 0 24 24"><path fill="#3c4cb0" d="M19 13h-6v6h-2v-6H5v-2h6V5h2v6h6v2z"/></svg>
<svg style="left:2216.200px;top:819.84px" width="22.5" height="22.5" viewBox="0 0 24 24"><path fill="#ababab" d="M6 19c0 1.100.900 2 2 2h8c1.100 0 2-.900 2-2V7H6v12zM19 4h-3.500l-1-1h-5l-1 1H5v2h14V4z"/></svg>
<svg style="left:2263.200px;top:819.84px" width="22.5" height="22.5" viewBox="0 0 24 24"><path fill="#3c4cb0" d="M9 18h12v-2H9v2zM3 6v2h18V6H3zm6 7h12v-2H9v2z"/></svg>
<div class="hl" style="top:931.57px;"></div>
<span class="t" style="left:20.01px;top:883px;font-size:21.624px;line-height:31px;font-weight:normal;color:#1c1c1c;transform:scaleX(0.9488);">Measured</span><span class="t" style="left:116.32px;top:883px;font-size:21.624px;line-height:31px;font-weight:normal;color:#1c1c1c;transform:scaleX(0.9435);">and</span><span class="t" style="left:155.45px;top:883px;font-size:21.624px;line-height:31px;font-weight:normal;color:#1c1c1c;transform:scaleX(0.9483);">Managed</span><span class="t" style="left:246.12px;top:883px;font-size:21.624px;line-height:31px;font-weight:normal;color:#1c1c1c;transform:scaleX(0.9040);">Energy</span><span class="t" style="left:313.14px;top:883px;font-size:21.624px;line-height:31px;font-weight:normal;color:#1c1c1c;transform:scaleX(0.9448);">Cooking</span><span class="t" style="left:393.18px;top:883px;font-size:21.624px;line-height:31px;font-weight:normal;color:#1c1c1c;transform:scaleX(0.9546);">Policy</span>
<span class="t" style="left:725.28px;top:883px;font-size:21.624px;line-height:31px;font-weight:normal;color:#1c1c1c;transform:scaleX(0.9590);">Project</span><span class="t" style="left:794.91px;top:883px;font-size:21.624px;line-height:31px;font-weight:normal;color:#1c1c1c;transform:scaleX(0.9268);">Design</span><span class="t" style="left:862.37px;top:883px;font-size:21.624px;line-height:31px;font-weight:normal;color:#1c1c1c;transform:scaleX(0.9507);">Document</span><span class="t" style="left:961.19px;top:883px;font-size:21.624px;line-height:31px;font-weight:normal;color:#1c1c1c;transform:scaleX(0.8929);">(PDD)</span><span class="t" style="left:1020.15px;top:883px;font-size:21.624px;line-height:31px;font-weight:normal;color:#1c1c1c;transform:scaleX(0.7236);">-</span><span class="t" style="left:1030.70px;top:883px;font-size:21.624px;line-height:31px;font-weight:normal;color:#1c1c1c;transform:scaleX(0.9076);">Review</span>
<span class="t" style="left:1459.50px;top:879px;font-size:21.624px;line-height:31px;font-weight:normal;color:#1468de;transform:scaleX(0.9489);">0.0.3881196</span>
<div class="a" style="left:1459.300px;top:910.42px;width:114.700px;height:3.200px;background:#0a63df;"></div>
<span class="t" style="left:1618.77px;top:883px;font-size:21.624px;line-height:31px;font-weight:normal;color:#1c1c1c;transform:scaleX(0.9276);">1.0.0</span>
<span class="t" style="left:1716.92px;top:883px;font-size:21.624px;line-height:31px;font-weight:normal;color:#1c1c1c;transform:scaleX(0.8516);">VC</span>
<span class="t" style="left:1814.01px;top:884px;font-size:19.992px;line-height:28px;font-weight:normal;color:#46a84a;transform:scaleX(0.9958);letter-spacing:0.5px;-webkit-text-stroke:0.90px #46a84a;">Published</span>
<svg style="left:2124px;top:885.52px" width="22.5" height="22.5" viewBox="0 0 24 24"><path fill="#3c4cb0" d="M9 3L5 6.990h3V14h2V6.990h3L9 3zm7 14.010V10h-2v7.010h-3L15 21l4-3.990h-3z"/></svg>
<svg style="left:2170px;top:885.52px" width="22.5" height="22.5" viewBox="0 0 24 24"><path fill="#3c4cb0" d="M19 13h-6v6h-2v-6H5v-2h6V5h2v6h6v2z"/></svg>
<svg style="left:2216.200px;top:885.52px" width="22.5" height="22.5" viewBox="0 0 24 24"><path fill="#ababab" d="M6 19c0 1.100.900 2 2 2h8c1.100 0 2-.900 2-2V7H6v12zM19 4h-3.500l-1-1h-5l-1 1H5v2h14V4z"/></svg>
<svg style="left:2263.200px;top:885.52px" width="22.5" height="22.5" viewBox="0 0 24 24"><path fill="#3c4cb0" d="M9 18h12v-2H9v2zM3 6v2h18V6H3zm6 7h12v-2H9v2z"/></svg>
<div class="hl" style="top:997.30px;"></div>
<span class="t" style="left:20.01px;top:948px;font-size:21.624px;line-height:31px;font-weight:normal;color:#1c1c1c;transform:scaleX(0.9488);">Measured</span><span class="t" style="left:116.32px;top:948px;font-size:21.624px;line-height:31px;font-weight:normal;color:#1c1c1c;transform:scaleX(0.9435);">and</span><span class="t" style="left:155.45px;top:948px;font-size:21.624px;line-height:31px;font-weight:normal;color:#1c1c1c;transform:scaleX(0.9483);">Managed</span><span class="t" style="left:246.12px;top:948px;font-size:21.624px;line-height:31px;font-weight:normal;color:#1c1c1c;transform:scaleX(0.9040);">Energy</span><span class="t" style="left:313.14px;top:948px;font-size:21.624px;line-height:31px;font-weight:normal;color:#1c1c1c;transform:scaleX(0.9448);">Cooking</span><span class="t" style="left:393.18px;top:948px;font-size:21.624px;line-height:31px;font-weight:normal;color:#1c1c1c;transform:scaleX(0.9546);">Policy</span>
<span class="t" style="left:725.34px;top:948px;font-size:21.624px;line-height:31px;font-weight:normal;color:#1c1c1c;transform:scaleX(0.9317);">Registry</span><span class="t" style="left:804.31px;top:948px;font-size:21.624px;line-height:31px;font-weight:normal;color:#1c1c1c;transform:scaleX(0.9715);">Account</span><span class="t" style="left:885.29px;top:948px;font-size:21.624px;line-height:31px;font-weight:normal;color:#1c1c1c;transform:scaleX(0.9736);">Application</span><span class="t" style="left:993.38px;top:948px;font-size:21.624px;line-height:31px;font-weight:normal;color:#1c1c1c;transform:scaleX(0.9078);">(RAA)</span>
<span class="t" style="left:1459.50px;top:945px;font-size:21.624px;line-height:31px;font-weight:normal;color:#1468de;transform:scaleX(0.9489);">0.0.3881196</span>
<div class="a" style="left:1459.300px;top:976.10px;width:114.700px;height:3.200px;background:#0a63df;"></div>
<span class="t" style="left:1618.77px;top:948px;font-size:21.624px;line-height:31px;font-weight:normal;color:#1c1c1c;transform:scaleX(0.9276);">1.0.0</span>
<span class="t" style="left:1716.92px;top:948px;font-size:21.624px;line-height:31px;font-weight:normal;color:#1c1c1c;transform:scaleX(0.8516);">VC</span>
<span class="t" style="left:1814.01px;top:950px;font-size:19.992px;line-height:28px;font-weight:normal;color:#46a84a;transform:scaleX(0.9958);letter-spacing:0.5px;-webkit-text-stroke:0.90px #46a84a;">Published</span>
<svg style="left:2124px;top:951.20px" width="22.5" height="22.5" viewBox="0 0 24 24"><path fill="#3c4cb0" d="M9 3L5 6.990h3V14h2V6.990h3L9 3zm7 14.010V10h-2v7.010h-3L15 21l4-3.990h-3z"/></svg>
<svg style="left:2170px;top:951.20px" width="22.5" height="22.5" viewBox="0 0 24 24"><path fill="#3c4cb0" d="M19 13h-6v6h-2v-6H5v-2h6V5h2v6h6v2z"/></svg>
<svg style="left:2216.200px;top:951.20px" width="22.5" height="22.5" viewBox="0 0 24 24"><path fill="#ababab" d="M6 19c0 1.100.900 2 2 2h8c1.100 0 2-.900 2-2V7H6v12zM19 4h-3.500l-1-1h-5l-1 1H5v2h14V4z"/></svg>
<svg style="left:2263.200px;top:951.20px" width="22.5" height="22.5" viewBox="0 0 24 24"><path fill="#3c4cb0" d="M9 18h12v-2H9v2zM3 6v2h18V6H3zm6 7h12v-2H9v2z"/></svg>
<div class="hl" style="top:1063.03px;"></div>
<span class="t" style="left:20.01px;top:1014px;font-size:21.624px;line-height:31px;font-weight:normal;color:#1c1c1c;transform:scaleX(0.9488);">Measured</span><span class="t" style="left:116.32px;top:1014px;font-size:21.624px;line-height:31px;font-weight:normal;color:#1c1c1c;transform:scaleX(0.9435);">and</span><span class="t" style="left:155.45px;top:1014px;font-size:21.624px;line-height:31px;font-weight:normal;color:#1c1c1c;transform:scaleX(0.9483);">Managed</span><span class="t" style="left:246.12px;top:1014px;font-size:21.624px;line-height:31px;font-weight:normal;color:#1c1c1c;transform:scaleX(0.9040);">Energy</span><span class="t" style="left:313.14px;top:1014px;font-size:21.624px;line-height:31px;font-weight:normal;color:#1c1c1c;transform:scaleX(0.9448);">Cooking</span><span class="t" style="left:393.18px;top:1014px;font-size:21.624px;line-height:31px;font-weight:normal;color:#1c1c1c;transform:scaleX(0.9546);">Policy</span>
<span class="t" style="left:725.30px;top:1014px;font-size:21.624px;line-height:31px;font-weight:normal;color:#1c1c1c;transform:scaleX(0.9454);">Document</span><span class="t" style="left:823.56px;top:1014px;font-size:21.624px;line-height:31px;font-weight:normal;color:#1c1c1c;transform:scaleX(0.9026);">Review</span>
<span class="t" style="left:1459.50px;top:1010px;font-size:21.624px;line-height:31px;font-weight:normal;color:#1468de;transform:scaleX(0.9489);">0.0.3881196</span>
<div class="a" style="left:1459.300px;top:1041.78px;width:114.700px;height:3.200px;background:#0a63df;"></div>
<span class="t" style="left:1618.77px;top:1014px;font-size:21.624px;line-height:31px;font-weight:normal;color:#1c1c1c;transform:scaleX(0.9276);">1.0.0</span>
<span class="t" style="left:1716.92px;top:1014px;font-size:21.624px;line-height:31px;font-weight:normal;color:#1c1c1c;transform:scaleX(0.8516);">VC</span>
<span class="t" style="left:1814.01px;top:1015px;font-size:19.992px;line-height:28px;font-weight:normal;color:#46a84a;transform:scaleX(0.9958);letter-spacing:0.5px;-webkit-text-stroke:0.90px #46a84a;">Published</span>
<svg style="left:2124px;top:1016.88px" width="22.5" height="22.5" viewBox="0 0 24 24"><path fill="#3c4cb0" d="M9 3L5 6.990h3V14h2V6.990h3L9 3zm7 14.010V10h-2v7.010h-3L15 21l4-3.990h-3z"/></svg>
<svg style="left:2170px;top:1016.88px" width="22.5" height="22.5" viewBox="0 0 24 24"><path fill="#3c4cb0" d="M19 13h-6v6h-2v-6H5v-2h6V5h2v6h6v2z"/></svg>
<svg style="left:2216.200px;top:1016.88px" width="22.5" height="22.5" viewBox="0 0 24 24"><path fill="#ababab" d="M6 19c0 1.100.900 2 2 2h8c1.100 0 2-.900 2-2V7H6v12zM19 4h-3.500l-1-1h-5l-1 1H5v2h14V4z"/></svg>
<svg style="left:2263.200px;top:1016.88px" width="22.5" height="22.5" viewBox="0 0 24 24"><path fill="#3c4cb0" d="M9 18h12v-2H9v2zM3 6v2h18V6H3zm6 7h12v-2H9v2z"/></svg>
<div class="vl" style="left:1803px;"></div>
<div class="vl" style="left:1953px;"></div>
<div class="vl" style="left:2113px;"></div>
<div class="vl" style="left:2252px;"></div>
<div class="vl" style="left:2303px;"></div>
<div class="hl" style="top:1069px;background:#e8e8e8;"></div>
<span class="t" style="left:1927.34px;top:1088px;font-size:12.24px;line-height:20px;font-weight:normal;color:#757575;transform:scaleX(1.0451);">Items</span><span class="t" style="left:1961.67px;top:1088px;font-size:12.24px;line-height:20px;font-weight:normal;color:#757575;transform:scaleX(1.0000);">per</span><span class="t" style="left:1982.45px;top:1088px;font-size:12.24px;line-height:20px;font-weight:normal;color:#757575;transform:scaleX(0.9842);">page:</span>
<span class="t" style="left:2019.84px;top:1088px;font-size:12.24px;line-height:20px;font-weight:normal;color:#222;transform:scaleX(1.0653);">25</span>
<div class="a" style="left:2020px;top:1109.200px;width:57.500px;height:1.300px;background:#bdbdbd;"></div>
<svg style="left:2064.800px;top:1095.800px" width="8.500" height="4.200" viewBox="0 0 10 5"><path fill="#757575" d="M0 0h10L5 5z"/></svg>
<span class="t" style="left:2115.06px;top:1088px;font-size:12.24px;line-height:20px;font-weight:normal;color:#757575;transform:scaleX(1.0230);">1</span><span class="t" style="left:2126.05px;top:1088px;font-size:12.24px;line-height:20px;font-weight:normal;color:#757575;transform:scaleX(0.8497);">–</span><span class="t" style="left:2135.86px;top:1088px;font-size:12.24px;line-height:20px;font-weight:normal;color:#757575;transform:scaleX(1.0214);">12</span><span class="t" style="left:2152.77px;top:1088px;font-size:12.24px;line-height:20px;font-weight:normal;color:#757575;transform:scaleX(1.1167);">of</span><span class="t" style="left:2167.22px;top:1088px;font-size:12.24px;line-height:20px;font-weight:normal;color:#757575;transform:scaleX(1.0214);">12</span>
<svg style="left:2221.700px;top:1085.400px" width="26.25" height="26.25" viewBox="0 0 24 24"><path fill="#c2c2c2" d="M15.410 7.410L14 6l-6 6 6 6 1.410-1.410L10.830 12z"/></svg>
<svg style="left:2261.950px;top:1085.400px" width="26.25" height="26.25" viewBox="0 0 24 24"><path fill="#c2c2c2" d="M10 6L8.590 7.410 13.170 12l-4.580 4.590L10 18l6-6z"/></svg>
</div></body></html>
